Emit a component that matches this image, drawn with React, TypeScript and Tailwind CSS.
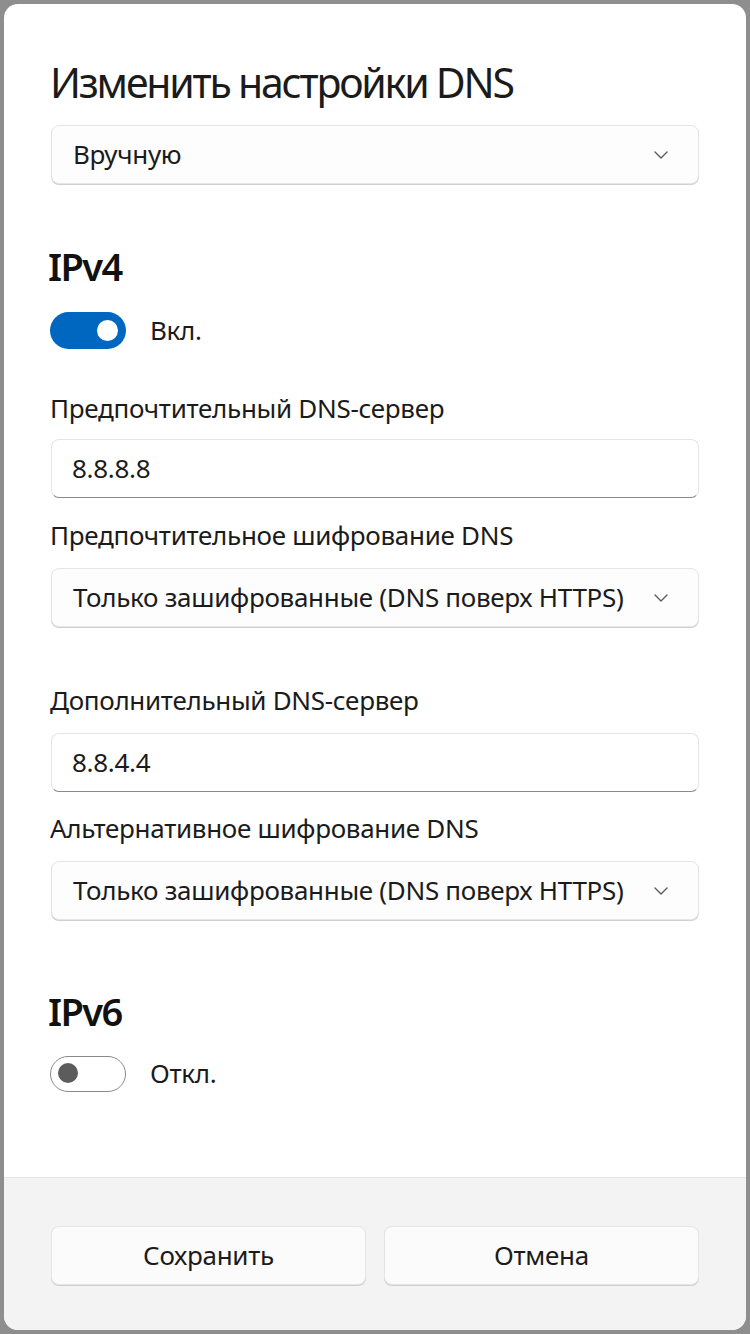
import React from "react";

const font = { fontFamily: '"Noto Sans", "Open Sans", sans-serif' };

function Chevron() {
  return (
    <svg width="14" height="8" viewBox="0 0 14 8" fill="none" className="shrink-0">
      <path d="M1 1 L7 7 L13 1" stroke="#5c5c5c" strokeWidth="1.4" strokeLinecap="round" strokeLinejoin="round" />
    </svg>
  );
}

function Select({ value }: { value: string }) {
  return (
    <div className="h-[59px] mx-[47px] rounded-[8px] border border-[#e5e5e5] bg-[#fdfdfd] shadow-[0_1px_0_#d0d0d0] flex items-center justify-between pl-[21px] pr-[30px]">
      <span className="text-[26px] text-[#1b1b1b] tracking-[-0.3px]">{value}</span>
      <Chevron />
    </div>
  );
}

function Input({ value }: { value: string }) {
  return (
    <div className="h-[59px] mx-[47px] rounded-[8px] border border-[#e5e5e5] border-b-[#8a8a8a] bg-white flex items-center pl-[20px]">
      <span className="text-[26px] text-[#1b1b1b] tracking-[-0.3px]">{value}</span>
    </div>
  );
}

function Label({ children }: { children: React.ReactNode }) {
  return <div className="px-[46px] text-[26px] text-[#1b1b1b] tracking-[-0.3px] leading-[30px]">{children}</div>;
}

export default function App() {
  return (
    <div className="w-[750px] h-[1334px] bg-[#8e8e8e] p-[4px] pr-[4px]" style={font}>
      <div className="h-[1326px] w-[742px] rounded-[14px] bg-white overflow-hidden flex flex-col">
        <div className="flex-1 flex flex-col">
          <div className="pt-[52px] px-[46px] text-[41px] leading-[52px] text-[#1b1b1b] tracking-[-2.2px]">Изменить настройки DNS</div>
          <div className="mt-[17px]">
            <Select value="Вручную" />
          </div>
          <div className="mt-[60px] px-[44px] text-[38px] leading-[44px] font-semibold text-[#111] tracking-[-1.6px]">IPv4</div>
          <div className="mt-[23px] px-[46px] flex items-center">
            <div className="w-[76px] h-[37px] rounded-full bg-[#0067c0] relative shrink-0">
              <div className="absolute right-[8px] top-[8px] w-[21px] h-[21px] rounded-full bg-white" />
            </div>
            <span className="ml-[24px] text-[26px] text-[#1b1b1b] tracking-[-0.3px]">Вкл.</span>
          </div>
          <div className="mt-[43px]">
            <Label>Предпочтительный DNS-сервер</Label>
          </div>
          <div className="mt-[16px]">
            <Input value="8.8.8.8" />
          </div>
          <div className="mt-[22px]">
            <Label>Предпочтительное шифрование DNS</Label>
          </div>
          <div className="mt-[18px]">
            <Select value="Только зашифрованные (DNS поверх HTTPS)" />
          </div>
          <div className="mt-[58px]">
            <Label>Дополнительный DNS-сервер</Label>
          </div>
          <div className="mt-[18px]">
            <Input value="8.8.4.4" />
          </div>
          <div className="mt-[21px]">
            <Label>Альтернативное шифрование DNS</Label>
          </div>
          <div className="mt-[18px]">
            <Select value="Только зашифрованные (DNS поверх HTTPS)" />
          </div>
          <div className="mt-[69px] px-[44px] text-[38px] leading-[44px] font-semibold text-[#111] tracking-[-1.6px]">IPv6</div>
          <div className="mt-[21px] px-[46px] flex items-center">
            <div className="w-[76px] h-[36px] rounded-full border-[1.5px] border-[#8a8a8a] bg-white relative shrink-0">
              <div className="absolute left-[7px] top-[6.5px] w-[20px] h-[20px] rounded-full bg-[#5c5c5c]" />
            </div>
            <span className="ml-[24px] text-[26px] text-[#1b1b1b] tracking-[-0.3px]">Откл.</span>
          </div>
        </div>
        <div className="h-[153px] bg-[#f3f3f3] border-t border-[#e5e5e5] flex gap-[18px] px-[47px] pt-[48px]">
          <div className="flex-1 h-[59px] rounded-[8px] bg-[#fbfbfb] border border-[#e5e5e5] shadow-[0_1px_0_#cfcfcf] flex items-center justify-center text-[26px] text-[#1b1b1b] tracking-[-0.3px]">Сохранить</div>
          <div className="flex-1 h-[59px] rounded-[8px] bg-[#fbfbfb] border border-[#e5e5e5] shadow-[0_1px_0_#cfcfcf] flex items-center justify-center text-[26px] text-[#1b1b1b] tracking-[-0.3px]">Отмена</div>
        </div>
      </div>
    </div>
  );
}
